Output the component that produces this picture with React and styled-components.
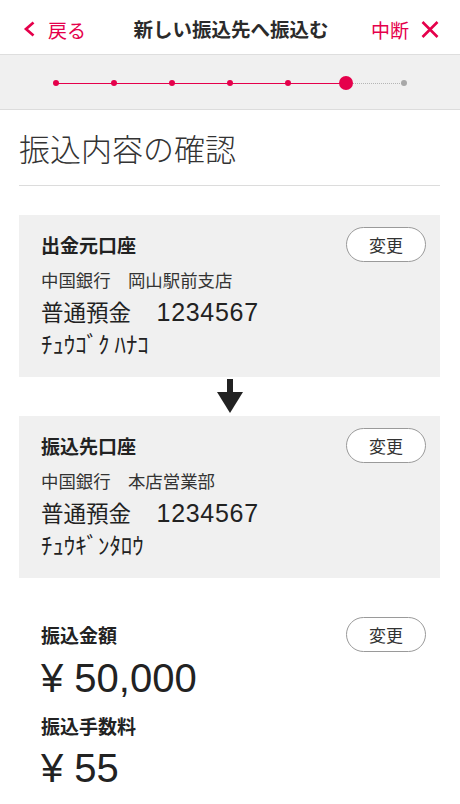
import React from "react";
import styled, { createGlobalStyle } from "styled-components";

const RED = "#e5004b";
const JP = '"Noto Sans CJK JP", "Noto Sans", sans-serif';
const NUM = '"Liberation Sans", "Noto Sans CJK JP", sans-serif';

const Global = createGlobalStyle`
  html, body { margin: 0; padding: 0; background: #fff; }
  body { font-family: ${JP}; color: #222; -webkit-font-smoothing: antialiased; }
  * { box-sizing: border-box; }
`;

const Page = styled.div`
  width: 460px;
  min-height: 804px;
  background: #fff;
`;

const Header = styled.header`
  height: 55px;
  border-bottom: 1px solid #dedede;
  display: grid;
  grid-template-columns: 1fr auto 1fr;
  align-items: center;
  padding: 4px 21px 0 23px;
`;

const HeaderAction = styled.button`
  display: flex;
  align-items: center;
  gap: ${(p) => p.$gap}px;
  justify-self: ${(p) => (p.$end ? "end" : "start")};
  background: none;
  border: 0;
  padding: 0;
  font-family: ${JP};
  font-size: 19px;
  color: ${RED};
  line-height: 1;
  cursor: pointer;
`;

const HeaderTitle = styled.h1`
  margin: 0;
  font-size: 19.5px;
  font-weight: 700;
  color: #2b2b2b;
  line-height: 1;
`;

const Progress = styled.div`
  height: 55px;
  background: #f0f0f0;
  border-bottom: 1px solid #dcdcdc;
  display: flex;
  align-items: center;
  justify-content: center;
  padding-top: 2px;
`;

const Track = styled.div`
  width: 348px;
  display: flex;
  align-items: center;
`;

const Step = styled.div`
  width: 0;
  display: flex;
  justify-content: center;
  align-items: center;
  position: relative;
  z-index: 1;
`;

const Dot = styled.span`
  flex-shrink: 0;
  width: ${(p) => p.$size}px;
  height: ${(p) => p.$size}px;
  border-radius: 50%;
  background: ${(p) => p.$color};
`;

const Segment = styled.span`
  flex: 1;
  height: 0;
  border-top: 1px ${(p) => (p.$done ? "solid" : "dotted")} ${(p) => (p.$done ? RED : "#b5b5b5")};
`;

const Main = styled.main`
  padding: 0 20px 0 19px;
`;

const PageTitle = styled.h2`
  margin: 22px 0 0;
  padding-bottom: 21px;
  border-bottom: 1px solid #dcdcdc;
  font-size: 31px;
  font-weight: 300;
  line-height: 32px;
  color: #333;
`;

const Spacer = styled.div`
  height: ${(p) => p.$h}px;
`;

const Card = styled.section`
  background: ${(p) => (p.$plain ? "transparent" : "#f0f0f0")};
  padding: ${(p) => (p.$plain ? "39px 14px 16px 22px" : "12px 14px 16px 22px")};
  height: ${(p) => (p.$plain ? "auto" : "162px")};
`;

const CardHead = styled.div`
  display: flex;
  align-items: center;
  justify-content: space-between;
  height: 35px;
`;

const Label = styled.h3`
  margin: ${(p) => p.$mt || 0}px 0 0;
  font-size: 19px;
  font-weight: ${(p) => p.$weight || 700};
  line-height: 28px;
  color: #222;
`;

const ChangeButton = styled.button`
  width: 80px;
  height: 35px;
  border-radius: 18px;
  border: 1px solid #9a9a9a;
  background: #fff;
  font-family: ${JP};
  font-size: 17px;
  color: #333;
  line-height: 1;
  padding: 0 0 1px;
  cursor: pointer;
`;

const Branch = styled.p`
  margin: 6px 0 0;
  font-size: 17.4px;
  line-height: 24px;
  color: #333;
`;

const Account = styled.p`
  margin: 3px 0 0;
  font-size: 22.5px;
  line-height: 32px;
  color: #222;
`;

const AccountNo = styled.span`
  font-family: ${NUM};
  font-size: 25px;
  letter-spacing: 0.7px;
  margin-left: 3px;
`;

const Kana = styled.p`
  margin: 0;
  font-size: 22.8px;
  line-height: 32px;
  color: #222;
`;

const ArrowRow = styled.div`
  height: 39px;
  display: flex;
  justify-content: center;
  padding-top: 2px;
`;

const Amount = styled.p`
  margin: ${(p) => p.$mt}px 0 0;
  font-family: ${NUM};
  font-size: 40px;
  line-height: 48px;
  color: #222;
`;

function Chevron() {
  return (
    <svg width="13" height="16" viewBox="0 0 13 16">
      <polyline points="10.5,1.5 3,8 10.5,14.5" fill="none" stroke={RED} strokeWidth="2.7" />
    </svg>
  );
}

function Cross() {
  return (
    <svg width="18" height="17" viewBox="0 0 18 17">
      <path d="M1.5 1 L16.5 16 M16.5 1 L1.5 16" stroke={RED} strokeWidth="2.6" fill="none" />
    </svg>
  );
}

function DownArrow() {
  return (
    <svg width="26" height="34" viewBox="0 0 26 34">
      <rect x="10" y="0" width="6" height="14" fill="#222" />
      <polygon points="0,13 26,13 13,34" fill="#222" />
    </svg>
  );
}

const steps = 7;
const current = 5;

function Stepper() {
  const items = [];
  for (let i = 0; i < steps; i++) {
    if (i > 0) items.push(<Segment key={`s${i}`} $done={i <= current} />);
    const size = i === current ? 14 : 6;
    const color = i <= current ? RED : "#a8a8a8";
    items.push(
      <Step key={`d${i}`}>
        <Dot $size={size} $color={color} />
      </Step>
    );
  }
  return <Track>{items}</Track>;
}

function AccountCard({ title, branch, type, number, kana }) {
  return (
    <Card>
      <CardHead>
        <Label>{title}</Label>
        <ChangeButton>変更</ChangeButton>
      </CardHead>
      <Branch>{branch}</Branch>
      <Account>
        {type}　<AccountNo>{number}</AccountNo>
      </Account>
      <Kana>{kana}</Kana>
    </Card>
  );
}

export default function App() {
  return (
    <Page>
      <Global />
      <Header>
        <HeaderAction $gap={12}>
          <Chevron />
          戻る
        </HeaderAction>
        <HeaderTitle>新しい振込先へ振込む</HeaderTitle>
        <HeaderAction $end $gap={12}>
          中断
          <Cross />
        </HeaderAction>
      </Header>
      <Progress>
        <Stepper />
      </Progress>
      <Main>
        <PageTitle>振込内容の確認</PageTitle>
        <Spacer $h={29} />
        <AccountCard
          title="出金元口座"
          branch="中国銀行　岡山駅前支店"
          type="普通預金"
          number="1234567"
          kana="ﾁｭｳｺﾞｸ ﾊﾅｺ"
        />
        <ArrowRow>
          <DownArrow />
        </ArrowRow>
        <AccountCard
          title="振込先口座"
          branch="中国銀行　本店営業部"
          type="普通預金"
          number="1234567"
          kana="ﾁｭｳｷﾞﾝﾀﾛｳ"
        />
        <Card $plain>
          <CardHead>
            <Label $weight={600}>振込金額</Label>
            <ChangeButton>変更</ChangeButton>
          </CardHead>
          <Amount $mt={2}>¥ 50,000</Amount>
          <Label $weight={600} $mt={10}>振込手数料</Label>
          <Amount $mt={4}>¥ 55</Amount>
        </Card>
      </Main>
    </Page>
  );
}
